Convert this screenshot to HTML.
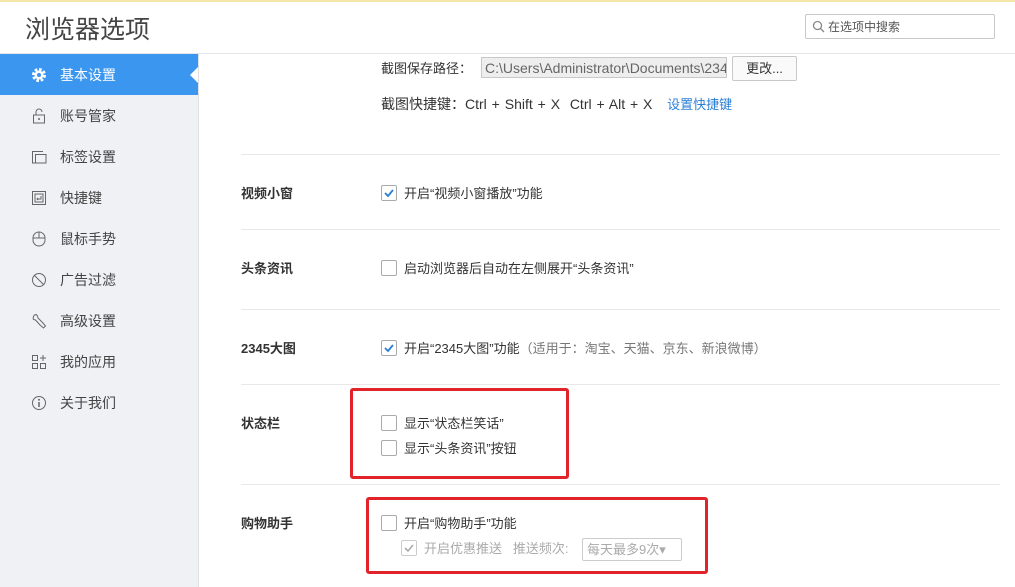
<!DOCTYPE html><html><head><meta charset="utf-8"><style>
body{margin:0;width:1015px;height:587px;overflow:hidden;background:#fff;font-family:"Liberation Sans","Noto Sans CJK SC",sans-serif;font-size:13px;color:#333;position:relative}
.a{position:absolute}
.top{left:0;top:0;width:1015px;height:2px;background:#f3e6a8}
.hdr{left:0;top:2px;width:1015px;height:51px;border-bottom:1px solid #e6e6e6;background:#fff}
.title{left:25px;top:10px;font-size:25px;color:#444}
.search{left:805px;top:14px;width:188px;height:23px;border:1px solid #c8c8c8;border-radius:2px}
.side{left:0;top:54px;width:198px;height:533px;background:#eff1f5;border-right:1px solid #e0e0e0}
.item{left:0;width:198px;height:41px;line-height:41px;font-size:14px;color:#444}
.item span{position:absolute;left:60px;top:1px}
.item svg{position:absolute;left:31px;top:13px}
.act{background:#3a96ef;color:#fff}
.sep{left:241px;width:759px;height:1px;background:#e8e8e8}
.lbl{left:241px;font-weight:bold;font-size:13px;color:#333}
.cb{width:14px;height:14px;border:1px solid #aaa;border-radius:2px;background:#fff}
.t{font-size:13px;color:#333}
.red{border:3px solid #e0242a;border-radius:3px}
</style></head><body>
<div class="a top"></div>
<div class="a hdr"></div>
<div class="a title">浏览器选项</div>
<div class="a search"><svg class="a" style="left:6px;top:5px" width="13" height="13"><circle cx="5.5" cy="5.5" r="4" fill="none" stroke="#888" stroke-width="1.3"/><line x1="8.5" y1="8.5" x2="12" y2="12" stroke="#888" stroke-width="1.3"/></svg><span class="a" style="left:22px;top:3px;font-size:12px;color:#555">在选项中搜索</span></div>
<div class="a side"></div>
<div class="a item act" style="top:54px"><svg width="16" height="16" viewBox="0 0 16 16"><circle cx="8" cy="8" r="5.5" fill="none" stroke="#fff" stroke-width="3" stroke-dasharray="2.6 1.7"/><circle cx="8" cy="8" r="4.5" fill="#fff"/><circle cx="8" cy="8" r="2" fill="#3a96ef"/></svg><span>基本设置</span></div>
<svg class="a" style="left:190px;top:67px" width="8" height="16"><path d="M8 0L0 8L8 16Z" fill="#fff"/></svg>
<div class="a item" style="top:95px"><svg width="16" height="16"><rect x="2.5" y="7" width="11" height="8" fill="none" stroke="#666"/><path d="M5 7V4a3 3 0 0 1 6 0" fill="none" stroke="#666"/><circle cx="8" cy="11" r="1" fill="#666"/></svg><span>账号管家</span></div>
<div class="a item" style="top:136px"><svg width="16" height="16"><path d="M1.5 14V2.5H12M4.5 14V5.5H15V14H1" fill="none" stroke="#666"/></svg><span>标签设置</span></div>
<div class="a item" style="top:177px"><svg width="16" height="16"><rect x="1.5" y="1.5" width="13" height="13" fill="none" stroke="#666"/><rect x="4" y="4" width="8" height="8" fill="none" stroke="#666"/><path d="M10 6v3H6M7 8l-1 1 1 1" fill="none" stroke="#666"/></svg><span>快捷键</span></div>
<div class="a item" style="top:218px"><svg width="16" height="16"><rect x="2" y="1" width="12" height="14" rx="6" fill="none" stroke="#666"/><path d="M2 7h12M8 1v6" stroke="#666"/></svg><span>鼠标手势</span></div>
<div class="a item" style="top:259px"><svg width="16" height="16"><circle cx="8" cy="8" r="6.5" fill="none" stroke="#666"/><path d="M3.5 3.5l9 9" stroke="#666"/></svg><span>广告过滤</span></div>
<div class="a item" style="top:300px"><svg width="16" height="16"><path d="M5 1.5a3.5 3.5 0 0 0-2.5 5l2 0.5L9 12l3.5 3 2-2-3-3.5-4.5-4.5-.5-2a3.5 3.5 0 0 0-1.5-1.5z" fill="none" stroke="#666"/></svg><span>高级设置</span></div>
<div class="a item" style="top:341px"><svg width="16" height="16"><rect x="1.5" y="1.5" width="5" height="5" fill="none" stroke="#666"/><rect x="1.5" y="9.5" width="5" height="5" fill="none" stroke="#666"/><rect x="9.5" y="9.5" width="5" height="5" fill="none" stroke="#666"/><path d="M12 1v6M9 4h6" stroke="#666"/></svg><span>我的应用</span></div>
<div class="a item" style="top:382px"><svg width="16" height="16"><circle cx="8" cy="8" r="6.5" fill="none" stroke="#666"/><path d="M8 7v5" stroke="#666" stroke-width="1.5"/><circle cx="8" cy="4.8" r="1" fill="#666"/></svg><span>关于我们</span></div>

<div class="a t" style="left:381px;top:58px">截图保存路径：</div>
<div class="a" style="left:481px;top:57px;height:21px;background:#eee;border:1px solid #c8c8c8;font-size:14px;color:#666;line-height:21px;padding-left:3px;overflow:hidden;white-space:nowrap;box-sizing:border-box;width:246px">C:\Users\Administrator\Documents\234</div>
<div class="a" style="left:732px;top:56px;width:63px;height:23px;border:1px solid #c8c8c8;border-radius:2px;background:#fafafa;text-align:center;line-height:23px;font-size:13px">更改...</div>
<div class="a t" style="left:381px;top:94px;font-size:14px;word-spacing:1px">截图快捷键：Ctrl + Shift + X &nbsp;Ctrl + Alt + X &nbsp;&nbsp;<span style="color:#2a7fd4;font-size:13px">设置快捷键</span></div>

<div class="a sep" style="top:154px"></div>
<div class="a lbl" style="top:183px">视频小窗</div>
<div class="a" style="left:381px;top:185px;width:16px;height:16px;border:1px solid #aaa;border-radius:2px;box-sizing:border-box"><svg class="a" style="left:1px;top:1px" width="12" height="12"><path d="M2 6l3 3 5-6" fill="none" stroke="#2a7fd4" stroke-width="1.8"/></svg></div>
<div class="a t" style="left:404px;top:183px">开启“视频小窗播放”功能</div>
<div class="a sep" style="top:229px"></div>
<div class="a lbl" style="top:258px">头条资讯</div>
<div class="a cb" style="left:381px;top:260px"></div>
<div class="a t" style="left:404px;top:258px">启动浏览器后自动在左侧展开“头条资讯”</div>
<div class="a sep" style="top:309px"></div>
<div class="a lbl" style="top:338px">2345大图</div>
<div class="a" style="left:381px;top:340px;width:16px;height:16px;border:1px solid #aaa;border-radius:2px;box-sizing:border-box"><svg class="a" style="left:1px;top:1px" width="12" height="12"><path d="M2 6l3 3 5-6" fill="none" stroke="#2a7fd4" stroke-width="1.8"/></svg></div>
<div class="a t" style="left:404px;top:338px">开启“2345大图”功能<span style="color:#777">（适用于：淘宝、天猫、京东、新浪微博）</span></div>
<div class="a sep" style="top:384px"></div>
<div class="a lbl" style="top:413px">状态栏</div>
<div class="a cb" style="left:381px;top:415px"></div>
<div class="a t" style="left:404px;top:413px">显示“状态栏笑话”</div>
<div class="a cb" style="left:381px;top:440px"></div>
<div class="a t" style="left:404px;top:438px">显示“头条资讯”按钮</div>
<div class="a red" style="left:350px;top:388px;width:213px;height:85px"></div>
<div class="a sep" style="top:484px"></div>
<div class="a lbl" style="top:513px">购物助手</div>
<div class="a cb" style="left:381px;top:515px"></div>
<div class="a t" style="left:404px;top:513px">开启“购物助手”功能</div>
<div class="a" style="left:401px;top:540px;width:16px;height:16px;border:1px solid #ccc;border-radius:2px;box-sizing:border-box"><svg class="a" style="left:1px;top:1px" width="12" height="12"><path d="M2 6l3 3 5-6" fill="none" stroke="#aaa" stroke-width="1.6"/></svg></div>
<div class="a t" style="left:424px;top:538px;color:#aaa">开启优惠推送 &nbsp;&nbsp;推送频次:</div>
<div class="a" style="left:582px;top:538px;width:100px;height:23px;border:1px solid #ccc;border-radius:2px;box-sizing:border-box;font-size:13px;color:#aaa;line-height:21px;padding-left:4px">每天最多9次▾</div>
<div class="a red" style="left:366px;top:497px;width:336px;height:71px"></div>
</body></html>
